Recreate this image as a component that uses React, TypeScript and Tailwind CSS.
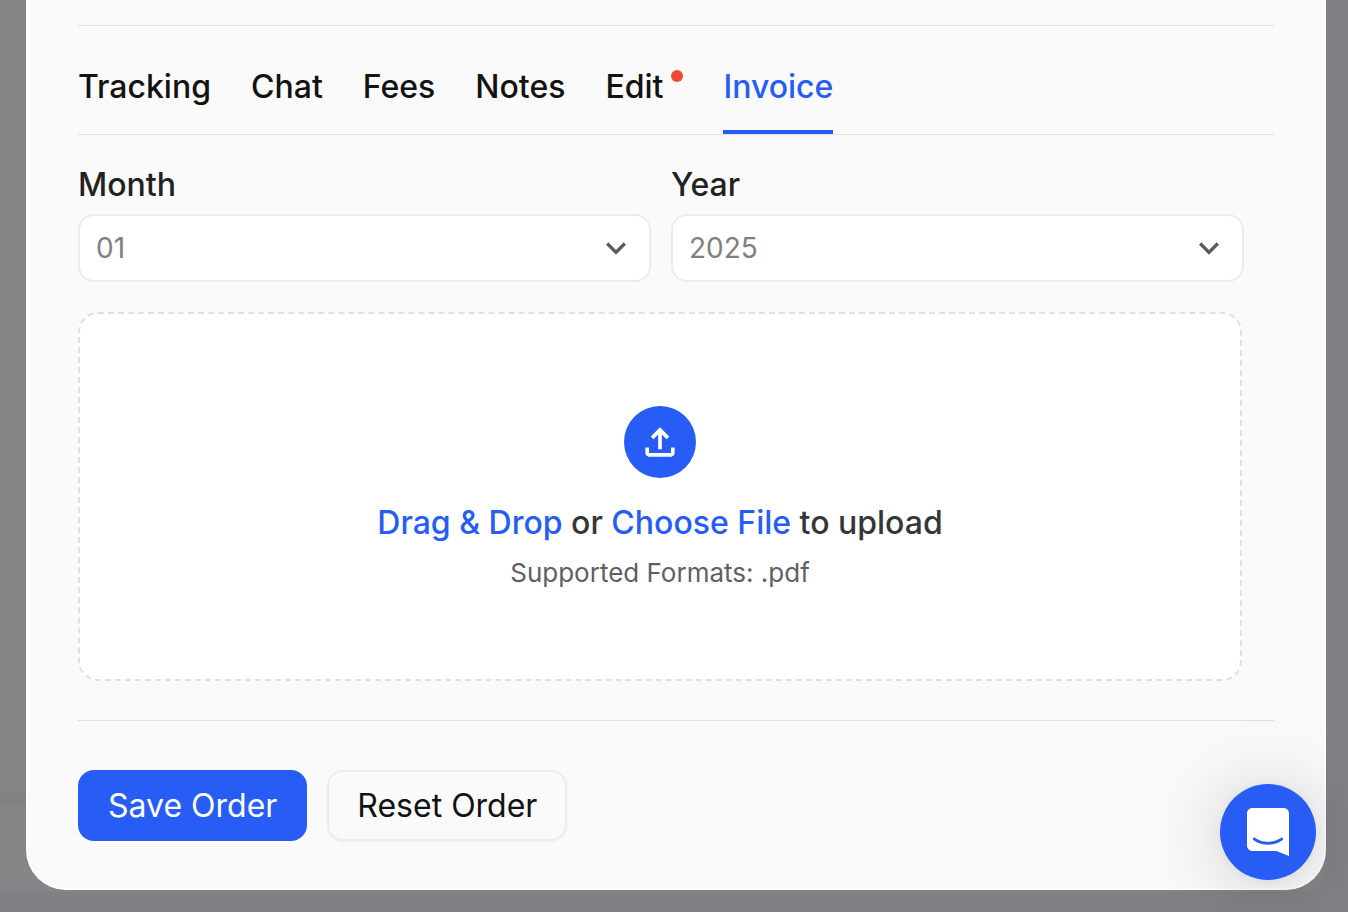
import { useState } from "react";
import clsx from "clsx";

const tabs = ["Tracking", "Chat", "Fees", "Notes", "Edit", "Invoice"];
const months = ["01", "02", "03", "04", "05", "06", "07", "08", "09", "10", "11", "12"];
const years = ["2023", "2024", "2025"];

interface SelectFieldProps {
  id: string;
  label: string;
  options: string[];
  value: string;
  onChange: (value: string) => void;
}

const SelectField = ({ id, label, options, value, onChange }: SelectFieldProps) => {
  return (
    <div className="flex flex-1 flex-col gap-1">
      <label htmlFor={id} className="text-[32px] leading-[50px] font-medium text-[#222222]">
        {label}
      </label>
      <div className="relative">
        <select
          id={id}
          value={value}
          onChange={(e) => onChange(e.target.value)}
          className="block h-[68px] w-full appearance-none rounded-2xl border-2 border-[#ececec] bg-white px-4 text-[28px] text-[#808080]"
        >
          {options.map((option) => (
            <option key={option} value={option}>
              {option}
            </option>
          ))}
        </select>
        <svg
          viewBox="0 0 24 24"
          className="pointer-events-none absolute top-[14px] right-[15px] size-10 fill-[#5c5c5c]"
        >
          <path d="M7.41 8.59 12 13.17l4.59-4.58L18 10l-6 6-6-6z" />
        </svg>
      </div>
    </div>
  );
};

const UploadIcon = () => (
  <svg viewBox="0 0 24 24" className="size-11 fill-white">
    <path d="M11 16V7.85l-2.6 2.6L7 9l5-5 5 5-1.4 1.45-2.6-2.6V16zm-5 4q-.825 0-1.412-.587Q4 18.825 4 18v-3h2v3h12v-3h2v3q0 .825-.587 1.413Q18.825 20 18 20z" />
  </svg>
);

const ChatIcon = () => (
  <svg viewBox="0 0 28 32" className="h-12 w-[42px] fill-white">
    <path d="M28 32s-4.714-1.855-8.527-3.34H3.437C1.54 28.66 0 27.026 0 25.013V3.644C0 1.633 1.54 0 3.437 0h21.125c1.898 0 3.437 1.632 3.437 3.645v18.404H28V32zm-4.139-11.982a.88.88 0 00-1.292-.105c-.03.026-3.015 2.681-8.57 2.681-5.486 0-8.517-2.636-8.571-2.684a.88.88 0 00-1.29.107 1.01 1.01 0 00-.219.708.992.992 0 00.318.664c.142.128 3.537 3.15 9.762 3.15 6.226 0 9.621-3.022 9.763-3.15a.992.992 0 00.317-.664 1.01 1.01 0 00-.218-.707z" />
  </svg>
);

const App = () => {
  const [activeTab, setActiveTab] = useState("Invoice");
  const [month, setMonth] = useState("01");
  const [year, setYear] = useState("2025");

  return (
    <div className="min-h-screen bg-[#808186] pr-[22px] font-['Inter',sans-serif] [font-optical-sizing:none]">
      {/* Dimmed page behind the modal */}
      <div className="rounded-br-[20px] bg-[linear-gradient(to_top,#848586_87px,#7f8081_88px,#838485_104px)] pb-0.5 pl-[26px]">
        {/* Modal */}
        <main className="rounded-b-[40px] border-2 border-t-0 border-white bg-[#fafafa] px-[50px] pt-[25px] pb-[47px]">
          {/* Tabs */}
          <nav className="flex gap-10 border-y border-[#e0e0e0]">
            {tabs.map((tab) => (
              <button
                key={tab}
                type="button"
                onClick={() => setActiveTab(tab)}
                className={clsx(
                  "flex h-[108px] cursor-pointer gap-2 border-b-4 pt-9 text-[32px] leading-[50px] font-medium",
                  activeTab === tab
                    ? "border-[#275df5] text-[#275df5]"
                    : "border-transparent text-[#121212]"
                )}
              >
                {tab}
                {tab === "Edit" && <span className="mt-2 size-3 rounded-full bg-[#f04837]"></span>}
              </button>
            ))}
          </nav>

          {/* Invoice form */}
          <div className="border-b border-[#e0e0e0] pt-[25px] pr-[30px] pb-[39px]">
            <div className="flex gap-5">
              <SelectField id="month" label="Month" options={months} value={month} onChange={setMonth} />
              <SelectField id="year" label="Year" options={years} value={year} onChange={setYear} />
            </div>
            <div className="mt-[30px] mr-0.5 flex flex-col items-center rounded-[20px] border-2 border-dashed border-[#e0e0e0] bg-white pt-[92px] pb-[86px]">
              <div className="flex size-[72px] items-center justify-center rounded-full bg-[#275df5]">
                <UploadIcon />
              </div>
              <p className="mt-5 text-[32px] leading-[50px] font-medium text-[#363636]">
                <span className="text-[#275df5]">Drag &amp; Drop</span> or{" "}
                <label htmlFor="file" className="cursor-pointer text-[#275df5]">
                  Choose File
                </label>{" "}
                to upload
              </p>
              <input id="file" type="file" accept=".pdf" className="hidden" />
              <p className="mt-1 text-[26px] leading-[41px] text-[#5f5f5f]">Supported Formats: .pdf</p>
            </div>
          </div>

          {/* Actions */}
          <div className="flex gap-5 pt-[49px]">
            <button
              type="button"
              className="h-[71px] cursor-pointer rounded-2xl bg-[#275df5] px-[30px] text-[32px] text-white"
            >
              Save Order
            </button>
            <button
              type="button"
              className="h-[71px] cursor-pointer rounded-2xl border-2 border-[#ececec] px-7 text-[32px] text-[#121212] shadow-xs"
            >
              Reset Order
            </button>
          </div>
        </main>
      </div>

      <button
        type="button"
        aria-label="Open chat"
        className="fixed right-8 bottom-8 flex size-24 cursor-pointer items-center justify-center rounded-full bg-[#275df5] shadow-[0_2px_12px_rgba(0,0,0,0.06),0_4px_80px_rgba(0,0,0,0.2)]"
      >
        <ChatIcon />
      </button>
    </div>
  );
};

export default App;
